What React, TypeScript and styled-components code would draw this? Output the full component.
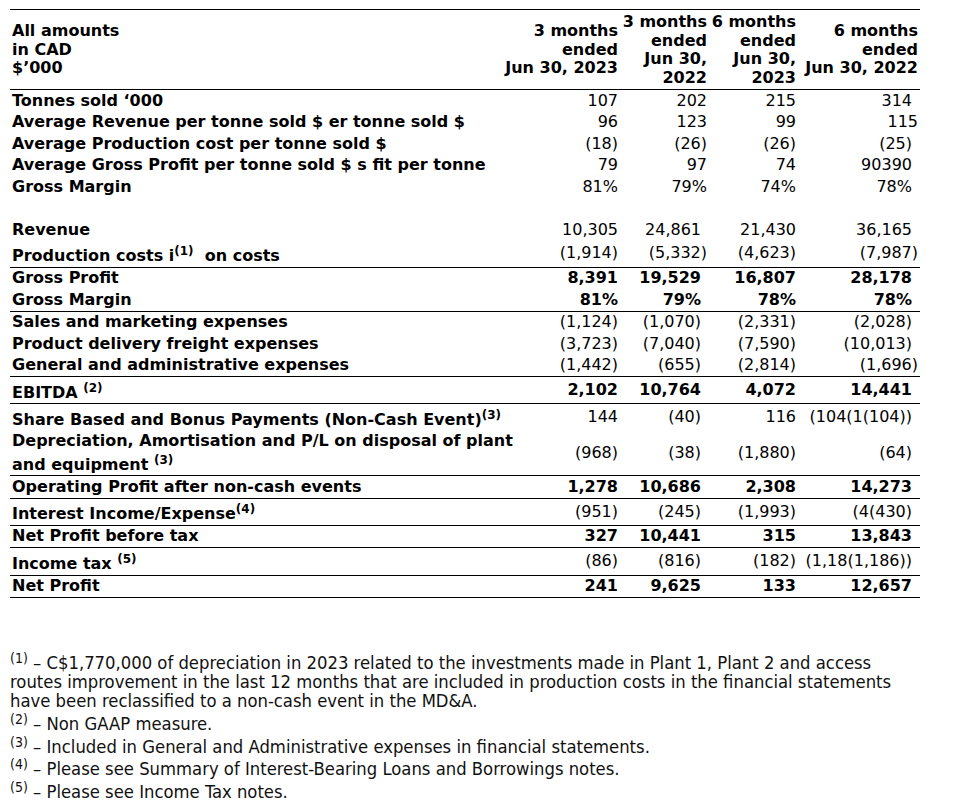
import React from "react";
import styled, { createGlobalStyle } from "styled-components";

const GlobalStyle = createGlobalStyle`
  html, body { margin: 0; padding: 0; background: #ffffff; }
  body {
    font-family: "DejaVu Sans", Verdana, sans-serif;
    color: #000000;
  }
`;

const Page = styled.div`
  padding: 9px 0 12px 10px;
  width: 946px;
  box-sizing: border-box;
`;

const Table = styled.div`
  width: 910px;
  border-top: 1px solid #000;
  border-bottom: 1px solid #000;
  font-size: 16px;
  line-height: 18.5px;
`;

const HeaderRow = styled.div`
  display: grid;
  grid-template-columns: 487px 123px 89px 89px 122px;
  align-items: center;
  border-bottom: 1px solid #000;
  font-weight: bold;
`;

const HeadCell = styled.div<{ $right?: boolean }>`
  padding: 3px 2px 2px;
  text-align: ${(p) => (p.$right ? "right" : "left")};
  white-space: nowrap;
`;

const Row = styled.div<{ $rule?: boolean; $bold?: boolean }>`
  display: grid;
  grid-template-columns: 512px 98px 89px 89px 122px;
  align-items: center;
  border-top: ${(p) => (p.$rule ? "1px solid #000" : "0")};
  font-weight: ${(p) => (p.$bold ? "bold" : "normal")};
`;

const Label = styled.div`
  padding: 1.5px 2px;
  font-weight: bold;
  white-space: nowrap;
`;

const Num = styled.div<{ $inset?: boolean }>`
  display: flex;
  justify-content: flex-end;
  padding: 1.5px ${(p) => (p.$inset ? "8px" : "2px")} 1.5px 2px;
  white-space: nowrap;
`;

const Sup = styled.sup`
  font-size: 12px;
  vertical-align: 5.7px;
`;

const Notes = styled.div`
  margin-top: 51px;
  width: 940px;
  font-family: "DejaVu Sans Condensed", "Liberation Sans Narrow", "DejaVu Sans", sans-serif;
  font-stretch: condensed;
  font-size: 18.3px;
  line-height: 19px;
  color: #111;
`;

const Note = styled.div``;

const NoteSup = styled.sup`
  font-size: 14px;
  vertical-align: 5.7px;
`;

type Cell = { v: string; i?: boolean };
const n = (v: string, i?: boolean): Cell => ({ v, i });

type RowDef = {
  label: React.ReactNode;
  cells: Cell[];
  rule?: boolean;
  bold?: boolean;
};

const rows: RowDef[] = [
  { label: "Tonnes sold ‘000", cells: [n("107"), n("202"), n("215"), n("314", true)] },
  {
    label: "Average Revenue per tonne sold $ er tonne sold $",
    cells: [n("96"), n("123"), n("99"), n("115")],
  },
  {
    label: "Average Production cost per tonne sold $",
    cells: [n("(18)"), n("(26)"), n("(26)"), n("(25)", true)],
  },
  {
    label: "Average Gross Profit per tonne sold $ s fit per tonne",
    cells: [n("79"), n("97"), n("74"), n("90390", true)],
  },
  { label: "Gross Margin", cells: [n("81%"), n("79%"), n("74%"), n("78%", true)] },
  { label: "\u00a0", cells: [n(""), n(""), n(""), n("")] },
  {
    label: "Revenue",
    cells: [n("10,305"), n("24,861", true), n("21,430"), n("36,165", true)],
  },
  {
    label: (
      <>
        Production costs i<Sup>(1)</Sup>{"\u00a0 "}on costs
      </>
    ),
    cells: [n("(1,914)"), n("(5,332)"), n("(4,623)"), n("(7,987)")],
  },
  {
    label: "Gross Profit",
    rule: true,
    bold: true,
    cells: [n("8,391"), n("19,529", true), n("16,807"), n("28,178", true)],
  },
  {
    label: "Gross Margin",
    bold: true,
    cells: [n("81%"), n("79%", true), n("78%"), n("78%", true)],
  },
  {
    label: "Sales and marketing expenses",
    rule: true,
    cells: [n("(1,124)"), n("(1,070)", true), n("(2,331)"), n("(2,028)", true)],
  },
  {
    label: "Product delivery freight expenses",
    cells: [n("(3,723)"), n("(7,040)", true), n("(7,590)"), n("(10,013)", true)],
  },
  {
    label: "General and administrative expenses",
    cells: [n("(1,442)"), n("(655)", true), n("(2,814)"), n("(1,696)")],
  },
  {
    label: (
      <>
        EBITDA <Sup>(2)</Sup>
      </>
    ),
    rule: true,
    bold: true,
    cells: [n("2,102"), n("10,764", true), n("4,072"), n("14,441", true)],
  },
  {
    label: (
      <>
        Share Based and Bonus Payments (Non-Cash Event)<Sup>(3)</Sup>
      </>
    ),
    rule: true,
    cells: [n("144"), n("(40)", true), n("116"), n("(104(1(104))", true)],
  },
  {
    label: (
      <>
        Depreciation, Amortisation and P/L on disposal of plant
        <br />
        and equipment <Sup>(3)</Sup>
      </>
    ),
    cells: [n("(968)"), n("(38)", true), n("(1,880)"), n("(64)", true)],
  },
  {
    label: "Operating Profit after non-cash events",
    rule: true,
    bold: true,
    cells: [n("1,278"), n("10,686", true), n("2,308"), n("14,273", true)],
  },
  {
    label: (
      <>
        Interest Income/Expense<Sup>(4)</Sup>
      </>
    ),
    rule: true,
    cells: [n("(951)"), n("(245)", true), n("(1,993)"), n("(4(430)", true)],
  },
  {
    label: "Net Profit before tax",
    rule: true,
    bold: true,
    cells: [n("327"), n("10,441", true), n("315"), n("13,843", true)],
  },
  {
    label: (
      <>
        Income tax <Sup>(5)</Sup>
      </>
    ),
    rule: true,
    cells: [n("(86)"), n("(816)", true), n("(182)"), n("(1,18(1,186))", true)],
  },
  {
    label: "Net Profit",
    rule: true,
    bold: true,
    cells: [n("241"), n("9,625", true), n("133"), n("12,657", true)],
  },
];

const headers: React.ReactNode[] = [
  <>
    3 months
    <br />
    ended
    <br />
    Jun 30, 2023
  </>,
  <>
    3 months
    <br />
    ended
    <br />
    Jun 30,
    <br />
    2022
  </>,
  <>
    6 months
    <br />
    ended
    <br />
    Jun 30,
    <br />
    2023
  </>,
  <>
    6 months
    <br />
    ended
    <br />
    Jun 30, 2022
  </>,
];

export default function App() {
  return (
    <Page>
      <GlobalStyle />
      <Table>
        <HeaderRow>
          <HeadCell>
            All amounts
            <br />
            in CAD
            <br />
            $’000
          </HeadCell>
          {headers.map((h, k) => (
            <HeadCell key={k} $right>
              {h}
            </HeadCell>
          ))}
        </HeaderRow>
        {rows.map((r, k) => (
          <Row key={k} $rule={r.rule} $bold={r.bold}>
            <Label>{r.label}</Label>
            {r.cells.map((c, j) => (
              <Num key={j} $inset={c.i}>
                {c.v}
              </Num>
            ))}
          </Row>
        ))}
      </Table>
      <Notes>
        <Note>
          <NoteSup>(1)</NoteSup> – C$1,770,000 of depreciation in 2023 related to the investments made in
          Plant 1, Plant 2 and access
          <br />
          routes improvement in the last 12 months that are included in production costs in the
          financial statements
          <br />
          have been reclassified to a non-cash event in the MD&amp;A.
        </Note>
        <Note>
          <NoteSup>(2)</NoteSup> – Non GAAP measure.
        </Note>
        <Note>
          <NoteSup>(3)</NoteSup> – Included in General and Administrative expenses in financial
          statements.
        </Note>
        <Note>
          <NoteSup>(4)</NoteSup> – Please see Summary of Interest-Bearing Loans and Borrowings notes.
        </Note>
        <Note>
          <NoteSup>(5)</NoteSup> – Please see Income Tax notes.
        </Note>
      </Notes>
    </Page>
  );
}
